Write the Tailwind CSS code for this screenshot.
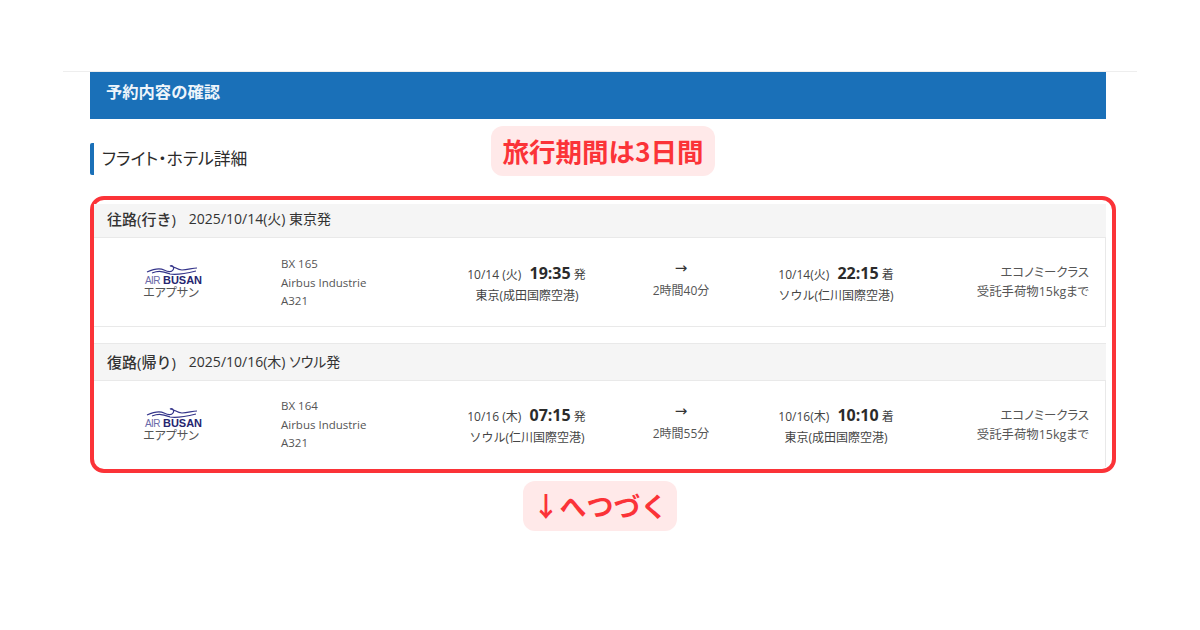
<!DOCTYPE html>
<html lang="ja">
<head>
    <meta charset="UTF-8">
    <title>予約内容の確認</title>
    <script src="https://cdn.jsdelivr.net/npm/@tailwindcss/browser@4"></script>
</head>
<body class="bg-white font-['Open_Sans','Noto_Sans_CJK_JP',sans-serif] text-[#333]">
<div class="relative w-[1200px] h-[630px] overflow-hidden pt-[71px]">
    <div class="mx-[63px] h-px bg-[#eeeeee]"></div>

    <div class="ml-[90px] w-[1016px] h-[47px] bg-[#1a70b8] pl-[16px] pt-[7px] text-[16.3px] leading-[26px] font-semibold text-[#eef5fb]">予約内容の確認</div>

    <!-- 見出し -->
    <div class="ml-[90px] mt-[24px] h-[32px] border-l-4 border-[#1a70b8] rounded-[2px] pl-[8px] text-[16.8px] leading-[32px] text-[#2b2b2b] [font-feature-settings:'palt']">フライト・ホテル詳細</div>

    <!-- 赤枠 -->
    <div class="ml-[90px] mt-[21px] w-[1026px] h-[277px] border-4 border-[#fb3338] rounded-[14px] pt-[4px] pr-[6px]">
        <div class="h-[34px] bg-[#f5f5f5] border-b border-[#e9e9e9] pl-[13px] leading-[30px] flex gap-[13px]">
            <span class="text-[15px] font-medium">往路(行き)</span><span class="text-[14px] [font-feature-settings:'palt']">2025/10/14(火) 東京発</span>
        </div>
        <div class="h-[89px] border-b border-r border-[#e9e9e9] grid grid-cols-[154px_182px_194px_114px_196px_155px] items-center text-[12px] text-[#444]">
            <div class="flex flex-col items-center pt-[1px]">
                <div class="w-[54px] h-[20px] relative">
                    <svg class="absolute left-0 top-0" width="54" height="12" viewBox="0 0 54 12" fill="none" stroke="#34348a" stroke-width="1.2"><path d="M3 8C12 4 16 4 20 6C24 8 27 9 29 6C31 3 28 1 26 2C30 2 33 6 38 6C44 6 48 4 53 4"/><path d="M8 9C16 6 20 8 26 10C32 11 44 9 52 7"/></svg>
                    <div class="absolute left-[1px] bottom-[-2px] whitespace-nowrap text-[11px] leading-[11px] font-bold text-[#25256f] font-['Liberation_Sans',sans-serif]"><span class="text-[#6a6aa8] font-normal text-[10px] tracking-[-0.6px]">AIR</span> BUSAN</div>
                </div>
                <span class="leading-[16px] mt-[1px] text-[#555] [font-feature-settings:'palt']">エアプサン</span>
            </div>
            <div class="pl-[33px] pt-[2px] text-[11.5px] leading-[18.5px] text-[#555]">BX 165<br>Airbus Industrie<br>A321</div>
            <div class="text-center pt-[2px]">
                <div class="leading-[24px] -ml-[1px]">10/14 (火)&nbsp;&thinsp; <b class="text-[16px] text-[#2b2b2b]">19:35</b> 発</div>
                <div class="leading-[18px]">東京(成田国際空港)</div>
            </div>
            <div class="text-center text-[12px] text-[#555] pb-[4px]">
                <div class="text-[15px] leading-[22px] text-[#333] font-['DejaVu_Sans',sans-serif]">→</div>
                <div class="leading-[24px]">2時間40分</div>
            </div>
            <div class="text-center pt-[1px]">
                <div class="leading-[24px]">10/14(火)&nbsp;&thinsp; <b class="text-[16px] text-[#2b2b2b]">22:15</b> 着</div>
                <div class="leading-[18px]">ソウル(仁川国際空港)</div>
            </div>
            <div class="text-right text-[12.4px] leading-[19px] text-[#555] [font-feature-settings:'palt']">エコノミークラス<br>受託手荷物15kgまで</div>
        </div>

        <div class="mt-[16px] h-[38px] bg-[#f5f5f5] border-y border-[#e9e9e9] pl-[13px] leading-[36px] flex gap-[13px]">
            <span class="text-[15px] font-medium">復路(帰り)</span><span class="text-[14px] [font-feature-settings:'palt']">2025/10/16(木) ソウル発</span>
        </div>
        <div class="h-[86px] border-r border-[#e9e9e9] grid grid-cols-[154px_182px_194px_114px_196px_155px] items-center text-[12px] text-[#444]">
            <div class="flex flex-col items-center pt-[3px]">
                <div class="w-[54px] h-[20px] relative">
                    <svg class="absolute left-0 top-0" width="54" height="12" viewBox="0 0 54 12" fill="none" stroke="#34348a" stroke-width="1.2"><path d="M3 8C12 4 16 4 20 6C24 8 27 9 29 6C31 3 28 1 26 2C30 2 33 6 38 6C44 6 48 4 53 4"/><path d="M8 9C16 6 20 8 26 10C32 11 44 9 52 7"/></svg>
                    <div class="absolute left-[1px] bottom-[-2px] whitespace-nowrap text-[11px] leading-[11px] font-bold text-[#25256f] font-['Liberation_Sans',sans-serif]"><span class="text-[#6a6aa8] font-normal text-[10px] tracking-[-0.6px]">AIR</span> BUSAN</div>
                </div>
                <span class="leading-[16px] mt-[1px] text-[#555] [font-feature-settings:'palt']">エアプサン</span>
            </div>
            <div class="pl-[33px] pt-[2px] text-[11.5px] leading-[18.5px] text-[#555]">BX 164<br>Airbus Industrie<br>A321</div>
            <div class="text-center pt-[2px]">
                <div class="leading-[24px] -ml-[1px]">10/16 (木)&nbsp;&thinsp; <b class="text-[16px] text-[#2b2b2b]">07:15</b> 発</div>
                <div class="leading-[18px]">ソウル(仁川国際空港)</div>
            </div>
            <div class="text-center text-[12px] text-[#555] pb-[2px]">
                <div class="text-[15px] leading-[22px] text-[#333] font-['DejaVu_Sans',sans-serif]">→</div>
                <div class="leading-[24px]">2時間55分</div>
            </div>
            <div class="text-center pt-[2px]">
                <div class="leading-[24px]">10/16(木)&nbsp;&thinsp; <b class="text-[16px] text-[#2b2b2b]">10:10</b> 着</div>
                <div class="leading-[18px]">東京(成田国際空港)</div>
            </div>
            <div class="text-right pt-[2px] text-[12.4px] leading-[19px] text-[#555] [font-feature-settings:'palt']">エコノミークラス<br>受託手荷物15kgまで</div>
        </div>
    </div>

    <!-- 注釈 -->
    <div class="absolute left-[491px] top-[126px] w-[224px] h-[50px] rounded-[12px] bg-[#ffe9e9] text-center text-[26.5px] leading-[50px] font-bold text-[#fb3338] font-['Noto_Sans_CJK_JP',sans-serif]">旅行期間は3日間</div>
    <div class="absolute left-[523px] top-[481px] w-[154px] h-[50px] rounded-[12px] bg-[#ffe9e9] text-center text-[27px] leading-[50px] font-bold text-[#fb3338] font-['Noto_Sans_CJK_JP',sans-serif]">↓へつづく</div>
</div>
</body>
</html>
